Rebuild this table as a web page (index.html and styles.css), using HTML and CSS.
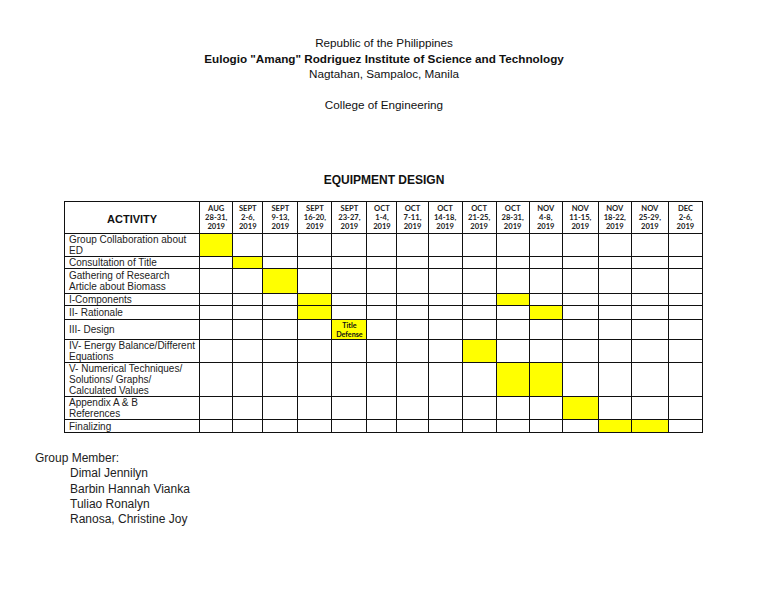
FILE: index.html
```html
<!DOCTYPE html>
<html>
<head>
<meta charset="utf-8">
<link rel="stylesheet" href="styles.css">
</head>
<body>
<div class="page">
  <div class="head">
    <div>Republic of the Philippines</div>
    <div class="b">Eulogio "Amang" Rodriguez Institute of Science and Technology</div>
    <div>Nagtahan, Sampaloc, Manila</div>
    <div class="college">College of Engineering</div>
  </div>
  <div class="title">EQUIPMENT DESIGN</div>
  <table class="gantt">
    <colgroup>
      <col class="c-act">
      <col style="width:33px"><col style="width:30px"><col style="width:35px"><col style="width:34px">
      <col style="width:35px"><col style="width:30px"><col style="width:31px"><col style="width:34px">
      <col style="width:34px"><col style="width:33px"><col style="width:33px"><col style="width:36px">
      <col style="width:33px"><col style="width:37px"><col style="width:34px">
    </colgroup>
    <tr class="r-head">
      <th class="act-h">ACTIVITY</th>
      <th class="dh">AUG<br>28-31,<br>2019</th>
      <th class="dh">SEPT<br>2-6,<br>2019</th>
      <th class="dh">SEPT<br>9-13,<br>2019</th>
      <th class="dh">SEPT<br>16-20,<br>2019</th>
      <th class="dh">SEPT<br>23-27,<br>2019</th>
      <th class="dh">OCT<br>1-4,<br>2019</th>
      <th class="dh">OCT<br>7-11,<br>2019</th>
      <th class="dh">OCT<br>14-18,<br>2019</th>
      <th class="dh">OCT<br>21-25,<br>2019</th>
      <th class="dh">OCT<br>28-31,<br>2019</th>
      <th class="dh">NOV<br>4-8,<br>2019</th>
      <th class="dh">NOV<br>11-15,<br>2019</th>
      <th class="dh">NOV<br>18-22,<br>2019</th>
      <th class="dh">NOV<br>25-29,<br>2019</th>
      <th class="dh">DEC<br>2-6,<br>2019</th>
    </tr>
    <tr class="r1">
      <td class="act">Group Collaboration about<br>ED</td>
      <td class="y"></td><td></td><td></td><td></td><td></td><td></td><td></td><td></td><td></td><td></td><td></td><td></td><td></td><td></td><td></td>
    </tr>
    <tr class="r2">
      <td class="act">Consultation of Title</td>
      <td></td><td class="y"></td><td></td><td></td><td></td><td></td><td></td><td></td><td></td><td></td><td></td><td></td><td></td><td></td><td></td>
    </tr>
    <tr class="r3">
      <td class="act">Gathering of Research<br>Article about Biomass</td>
      <td></td><td></td><td class="y"></td><td></td><td></td><td></td><td></td><td></td><td></td><td></td><td></td><td></td><td></td><td></td><td></td>
    </tr>
    <tr class="r4">
      <td class="act">I-Components</td>
      <td></td><td></td><td></td><td class="y"></td><td></td><td></td><td></td><td></td><td></td><td class="y"></td><td></td><td></td><td></td><td></td><td></td>
    </tr>
    <tr class="r5">
      <td class="act">II- Rationale</td>
      <td></td><td></td><td></td><td class="y"></td><td></td><td></td><td></td><td></td><td></td><td></td><td class="y"></td><td></td><td></td><td></td><td></td>
    </tr>
    <tr class="r6">
      <td class="act">III- Design</td>
      <td></td><td></td><td></td><td></td><td class="y note">Title<br>Defense</td><td></td><td></td><td></td><td></td><td></td><td></td><td></td><td></td><td></td><td></td>
    </tr>
    <tr class="r7">
      <td class="act">IV- Energy Balance/Different<br>Equations</td>
      <td></td><td></td><td></td><td></td><td></td><td></td><td></td><td></td><td class="y"></td><td></td><td></td><td></td><td></td><td></td><td></td>
    </tr>
    <tr class="r8">
      <td class="act">V- Numerical Techniques/<br>Solutions/ Graphs/<br>Calculated Values</td>
      <td></td><td></td><td></td><td></td><td></td><td></td><td></td><td></td><td></td><td class="y"></td><td class="y"></td><td></td><td></td><td></td><td></td>
    </tr>
    <tr class="r9">
      <td class="act">Appendix A &amp; B<br>References</td>
      <td></td><td></td><td></td><td></td><td></td><td></td><td></td><td></td><td></td><td></td><td></td><td class="y"></td><td></td><td></td><td></td>
    </tr>
    <tr class="r10">
      <td class="act">Finalizing</td>
      <td></td><td></td><td></td><td></td><td></td><td></td><td></td><td></td><td></td><td></td><td></td><td></td><td class="y"></td><td class="y"></td><td></td>
    </tr>
  </table>
  <div class="members">
    <div class="mh">Group Member:</div>
    <div class="names">
      <div>Dimal Jennilyn</div>
      <div>Barbin Hannah Vianka</div>
      <div>Tuliao Ronalyn</div>
      <div>Ranosa, Christine Joy</div>
    </div>
  </div>
</div>
</body>
</html>
```

FILE: styles.css
```css
html, body {
  margin: 0;
  padding: 0;
  background: #fff;
}
body {
  font-family: "Liberation Sans", Arial, sans-serif;
  color: #111;
  width: 768px;
  height: 594px;
  overflow: hidden;
}
.page {
  padding-top: 35px;
}
.head {
  text-align: center;
  font-size: 11.7px;
  line-height: 15.5px;
}
.head .b {
  font-weight: bold;
}
.head .college {
  margin-top: 15.5px;
}
.title {
  text-align: center;
  font-weight: bold;
  font-size: 12px;
  line-height: 15.5px;
  margin-top: 60px;
}
.gantt {
  margin-top: 13px;
  margin-left: 64px;
  width: 639px;
  border-collapse: collapse;
  table-layout: fixed;
}
.c-act {
  width: 135px;
}
.gantt th, .gantt td {
  border: 1px solid #111;
  padding: 0;
}
.gantt .act-h {
  font-size: 11px;
  font-weight: bold;
  text-align: center;
  vertical-align: middle;
  padding-top: 2px;
}
.gantt .dh {
  font-family: Lato, "Open Sans", sans-serif;
  font-weight: bold;
  font-size: 7.6px;
  line-height: 9px;
  text-align: center;
  vertical-align: middle;
  color: #222;
  padding-bottom: 1px;
  white-space: nowrap;
}
.gantt .act {
  font-size: 10px;
  line-height: 11px;
  padding-left: 4px;
  vertical-align: middle;
  color: #222;
  white-space: nowrap;
}
.gantt .y {
  background: #ffff00;
}
.gantt .note {
  font-family: Lato, "Open Sans", sans-serif;
  font-weight: bold;
  font-size: 7.2px;
  line-height: 9px;
  text-align: center;
  vertical-align: middle;
}
.r-head { height: 32px; }
.r1 { height: 23px; }
.r2 { height: 12px; }
.r3 { height: 25px; }
.r4 { height: 12px; }
.r5 { height: 14px; }
.r6 { height: 20px; }
.r7 { height: 23px; }
.r8 { height: 33px; }
.r9 { height: 23px; }
.r10 { height: 13px; }
.members {
  margin-top: 18px;
  font-size: 12px;
  line-height: 15.3px;
  color: #222;
}
.mh {
  margin-left: 35px;
}
.names {
  margin-left: 70px;
}
```
